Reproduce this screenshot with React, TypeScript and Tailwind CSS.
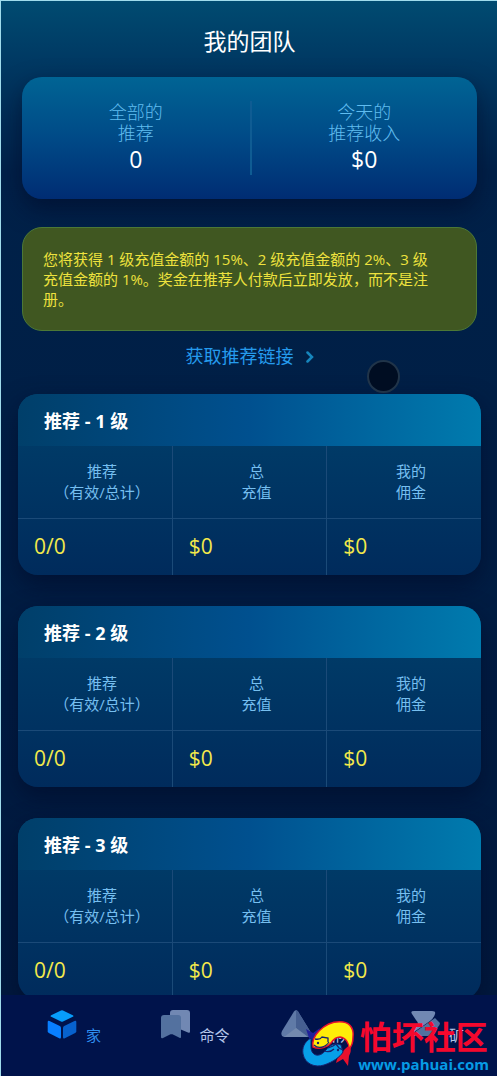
import React from 'react';
import { clsx } from 'clsx';

interface NavItemProps {
    label: string;
    active?: boolean;
    children: React.ReactNode;
}

const levels = [1, 2, 3];

const stats = [
    { lines: ['全部的', '推荐'], value: '0' },
    { lines: ['今天的', '推荐收入'], value: '$0' },
];

const columns = [
    { lines: ['推荐', '（有效/总计）'], value: '0/0' },
    { lines: ['总', '充值'], value: '$0' },
    { lines: ['我的', '佣金'], value: '$0' },
];

const Summary: React.FC = () => (
    <section className="mx-5 mt-5 grid grid-cols-2 rounded-[20px] bg-gradient-to-b from-[#006494] via-[#004a87] to-[#002c73] py-6 shadow-[0_10px_24px_rgba(0,10,40,0.6)]">
        {stats.map((stat, i) => (
            <div
                key={stat.value}
                className={clsx('flex h-[74px] flex-col items-center text-center', i > 0 && 'border-l-2 border-[#0f5c93]')}
            >
                <p className="pt-px text-[18px] leading-[21px] font-light text-[#60bdf0]">
                    {stat.lines[0]}
                    <br />
                    {stat.lines[1]}
                </p>
                <p className="text-[23px] leading-[30px] text-white">{stat.value}</p>
            </div>
        ))}
    </section>
);

const LevelCard: React.FC<{ level: number }> = ({ level }) => (
    <section className="overflow-hidden rounded-[20px] bg-gradient-to-b from-[#00406b] to-[#002b5c] shadow-[0_10px_24px_rgba(0,10,40,0.6)]">
        <h2 className="h-[52px] bg-gradient-to-r from-[#003f6a] via-[#00508f] to-[#007bae] pl-[26px] text-[18px] leading-[54px] font-bold text-white">
            推荐 - {level} 级
        </h2>
        <table className="w-full table-fixed border-collapse">
            <thead>
                <tr className="h-[72px] border-b border-[#1b4a78]">
                    {columns.map((col) => (
                        <th
                            key={col.lines[0]}
                            scope="col"
                            className="border-l border-[#1b4a78] pl-[14px] text-[15px] leading-[21px] font-normal text-[#76bff0] first:border-l-0"
                        >
                            {col.lines[0]}
                            <br />
                            {col.lines[1]}
                        </th>
                    ))}
                </tr>
            </thead>
            <tbody>
                <tr className="h-[57px]">
                    {columns.map((col) => (
                        <td
                            key={col.lines[0]}
                            className="border-l border-[#1b4a78] pl-4 text-[21px] text-[#f3e94b] first:border-l-0"
                        >
                            {col.value}
                        </td>
                    ))}
                </tr>
            </tbody>
        </table>
    </section>
);

const NavItem: React.FC<NavItemProps> = ({ label, active = false, children }) => (
    <a
        href="#"
        className={clsx(
            'flex items-start justify-center gap-2 pt-3 text-[15px] whitespace-nowrap',
            active ? 'text-[#2f8ff0]' : 'text-[#b4c6ea]'
        )}
    >
        <svg width="32" height="32" viewBox="0 0 32 32" className="shrink-0" aria-hidden="true">
            {children}
        </svg>
        <span className="pt-4 leading-6">{label}</span>
    </a>
);

const Watermark: React.FC = () => (
    <div className="pointer-events-none absolute right-2 bottom-0 flex items-end">
        <svg width="58" height="58" viewBox="0 0 58 58" aria-hidden="true">
            <path d="M6 11L13 15L20 10L15 20L10 23Z" fill="#20209a" />
            <path d="M50 27Q44 31 42 35Q37 39 36 45L43 41L48 48L49 38Q52 33 50 27Z" fill="#e8112d" />
            <path d="M11 20C4 24 2 30 3 36C5 46 15 50 24 47C33 44 40 39 43 34L41 27C37 25 33 26 30 28C26 31 24 36 19 37C14 38 11 34 11 29Z" fill="#079fe8" stroke="#17236e" strokeWidth="1" />
            <path d="M13 29C12 23 14 18 19 13C26 6 35 3 43 4C51 5 54 12 53 19C53 24 52 28 49 31C49 25 46 20 40 19C36 19 33 22 31 25C28 29 20 32 13 29Z" fill="#ffed08" stroke="#e8112d" strokeWidth="1.5" />
            <path d="M14 27C18 31 25 30 29 24M15 21Q20 22 22 19L28 20L28 24M24 33Q30 35 34 31M28 30L33 28L36 26L39 30L43 32" fill="none" stroke="#17236e" strokeWidth="1.3" />
            <circle cx="18" cy="25" r="1.2" fill="#17236e" />
            <circle cx="38" cy="32" r="1.2" fill="#17236e" />
        </svg>
        <div className="text-center font-bold">
            <p className="text-[32px] leading-[30px] text-[#f5082d]">怕坏社区</p>
            <p className="text-[15px] leading-6 text-[#069be5]">www.pahuai.com</p>
        </div>
    </div>
);

const BottomNav: React.FC = () => (
    <nav className="relative grid h-[81px] shrink-0 grid-cols-4 bg-[#00134b] pl-3">
        <NavItem label="家" active>
            <path d="M15 3.4Q16 3 17 3.4L26.8 8.2Q28.2 9 26.8 9.8L17 14.6Q16 15 15 14.6L5.2 9.8Q3.8 9 5.2 8.2Z" fill="#079dfa" />
            <path d="M3.5 14Q1.7 13.3 1.7 15V24.2Q1.7 25.4 2.8 26L13.2 31.2Q15 32 15 30.2V21Q15 19.7 13.8 19Z" fill="#087fff" />
            <path d="M28.5 14Q30.3 13.3 30.3 15V24.2Q30.3 25.4 29.2 26L18.8 31.2Q17 32 17 30.2V21Q17 19.7 18.2 19Z" fill="#0762ce" />
        </NavItem>
        <NavItem label="命令">
            <path d="M14 3H28Q31 3 31 6V24.5Q31 26.5 29 25.5L11 18V6Q11 3 14 3Z" fill="#7188b3" />
            <path d="M5 8H19Q22 8 22 11V30Q22 31.5 20.5 30.8L13.5 27.3Q12.5 27 11.5 27.3L4 31Q2 31.7 2 30V11Q2 8 5 8Z" fill="#53719f" />
        </NavItem>
        <NavItem label="团队">
            <path d="M14 4.5Q16 2 18 4.5L30 24Q32 29 28 30H4Q0 29 2 24Z" fill="#607aa7" />
            <path d="M16 3Q17 3 18 4.5L30 24Q32 29 28 30L16 21Z" fill="#465f91" />
            <path d="M16 21L28 30H4Z" fill="#7389ae" />
        </NavItem>
        <NavItem label="矿">
            <path d="M5 4H23Q27 4 26 7Q25 11 21 14L5 25Q3 25 4 22L9 17Q9 15 7 13L3 7Q1 4 5 4Z" fill="#7188b3" />
            <path d="M26 11L31 16Q31 18 29 20L25 27Q24 29 21 29H6Q2 29 6 25Z" fill="#53719f" />
        </NavItem>
        <Watermark />
    </nav>
);

const App: React.FC = () => {
    return (
        <div
            lang="zh-CN"
            className="relative flex h-screen flex-col border-t border-l border-[#9fdcec] bg-[#001b40] font-['Open_Sans','Noto_Sans_CJK_SC',sans-serif]"
        >
            <main className="min-h-0 flex-1 overflow-y-auto bg-[linear-gradient(to_bottom,#004b71_0px,#003963_60px,#002149_170px,#001f46_400px,#00193e_100%)] pl-px [scrollbar-width:none]">
                <h1 className="pt-6 text-center text-[23px] leading-8 text-white">我的团队</h1>
                <Summary />
                <p className="mx-5 mt-7 rounded-[20px] border border-[#4c7836] bg-[#405721] py-[21px] pr-10 pl-5 text-[15px] leading-5 text-[#eee23e]">
                    您将获得 1 级充值金额的 15%、2 级充值金额的 2%、3 级充值金额的 1%。奖金在推荐人付款后立即发放，而不是注册。
                </p>
                <div className="relative mt-3 flex justify-center">
                    <a href="#" className="flex items-center gap-3 text-[18px] leading-[27px] text-[#259bed]">
                        获取推荐链接
                        <svg width="8" height="12" viewBox="0 0 8 12" fill="none" aria-hidden="true">
                            <path d="M1.5 1.5L6 6L1.5 10.5" stroke="#1686bd" strokeWidth="2.5" strokeLinecap="round" />
                        </svg>
                    </a>
                    <span className="absolute top-[17px] right-[97px] size-[33px] rounded-full border-2 border-[#203449] bg-[#000d22]" />
                </div>
                <div className="mx-4 mt-6 flex flex-col gap-[31px] pb-8">
                    {levels.map((level) => (
                        <LevelCard key={level} level={level} />
                    ))}
                </div>
            </main>
            <BottomNav />
        </div>
    );
};

export default App;
